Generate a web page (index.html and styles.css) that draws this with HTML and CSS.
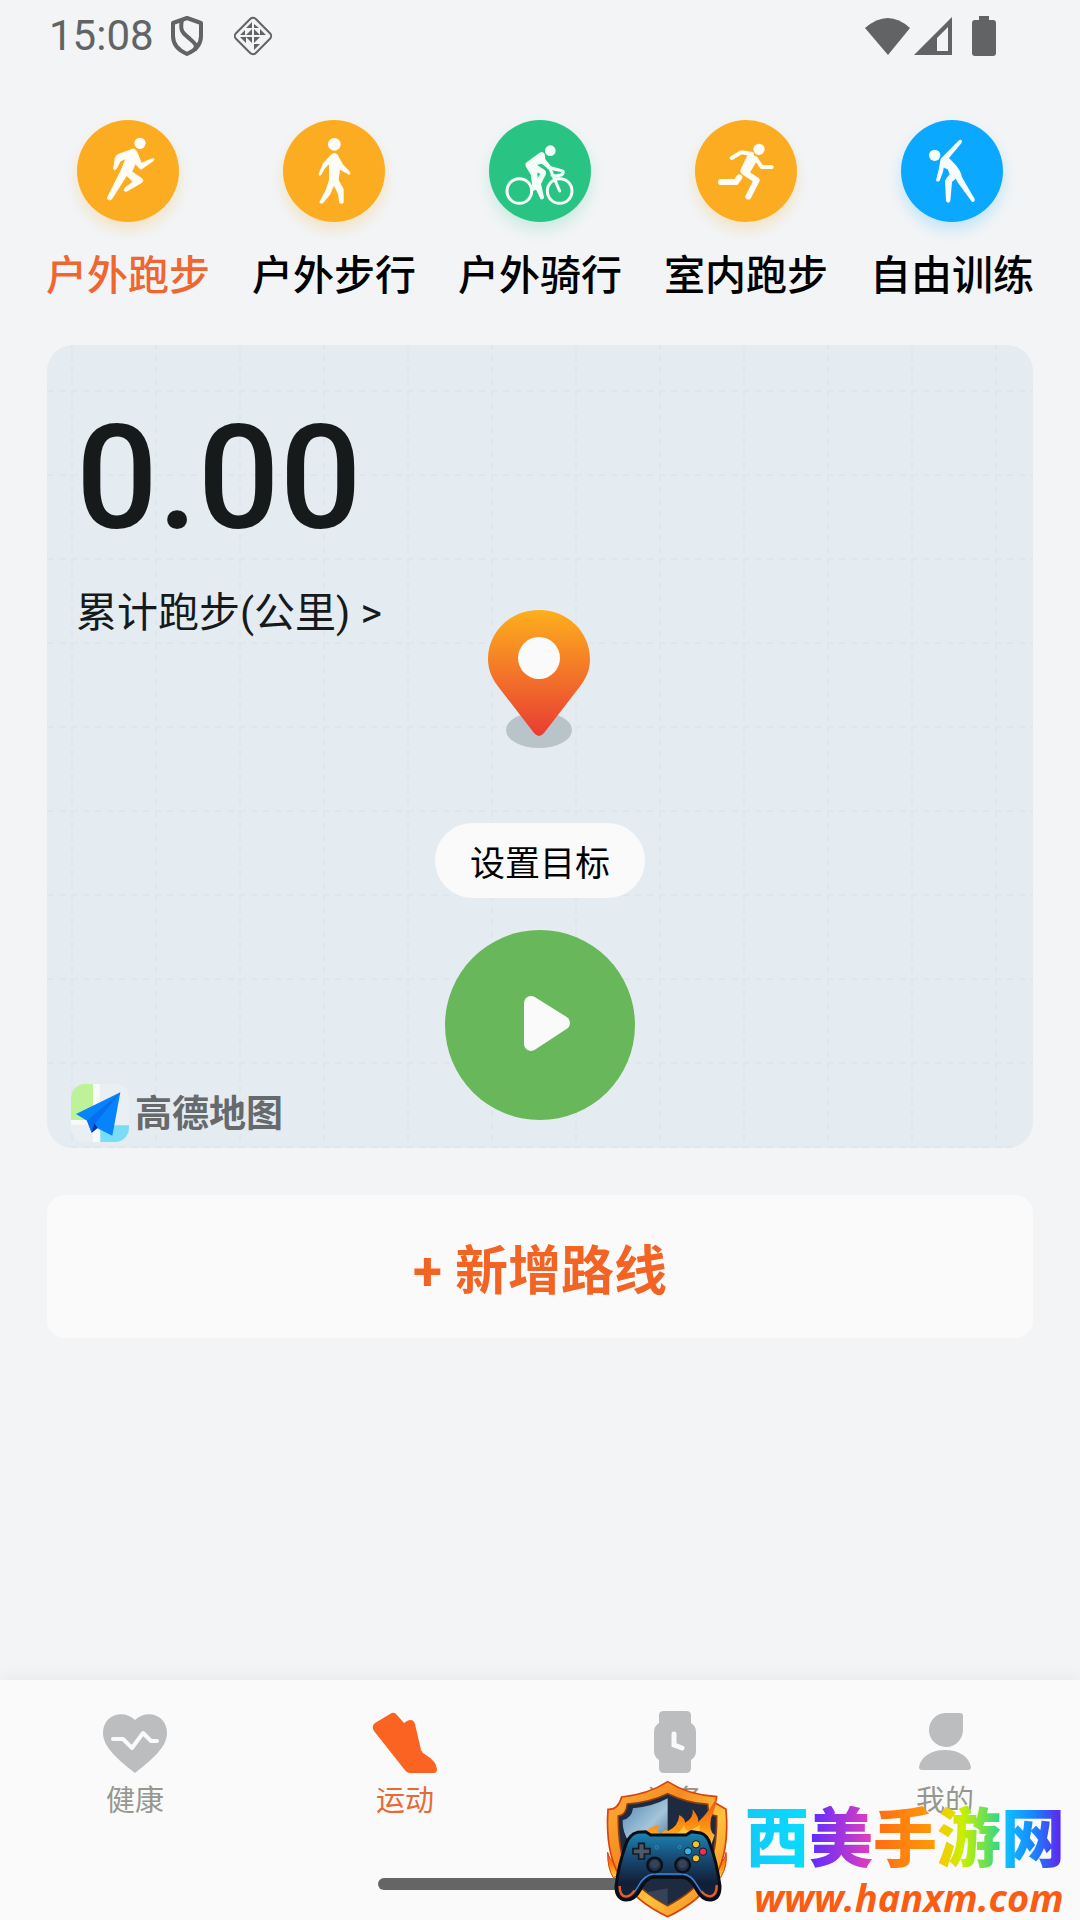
FILE: index.html
```html
<!DOCTYPE html>
<html lang="zh-CN">
<head>
  <meta charset="UTF-8" />
  <meta name="viewport" content="width=device-width, initial-scale=1.0" />
  <title>运动</title>
  <link rel="stylesheet" href="styles.css">
</head>
<body>
  <header class="status-bar">
    <span class="time">15:08</span>
    <svg class="status-shield" width="32" height="40" viewBox="0 0 32 40" fill="none" stroke="#626365" stroke-width="4" stroke-linejoin="round">
      <path d="M16 2 L30 7 V20 C30 29 23 35 16 38 C9 35 2 29 2 20 V7 Z" />
      <path d="M11 4 C8 17 14 18 19 23 C25 28 26 30 24 34" />
    </svg>
    <svg class="status-diamond" width="42" height="44" viewBox="0 0 42 44">
      <rect x="7" y="8" width="28" height="28" rx="4" transform="rotate(45 21 22)" fill="none" stroke="#626365" stroke-width="2" />
      <path d="M20 8 V14 H14 Z M34 21 H28 V15 Z M22 36 V30 H28 Z M8 23 H14 V29 Z M20 15 V21 H14 Z M22 15 L28 21 H22 Z M22 29 V23 H28 Z M20 29 L14 23 H20 Z M22 14 H27 L22 10 Z M13 16 V21 H8 Z" fill="#626365" />
    </svg>
    <div class="status-right">
      <svg width="46" height="37" viewBox="0 0 46 37"><path d="M0 10 Q23 -10 45 10 L23 37 Z" fill="#626365" /></svg>
      <svg width="38" height="38" viewBox="0 0 38 38"><path d="M38 0 V38 H0 Z M34 10 L23 21 V34 H34 Z" fill="#626365" fill-rule="evenodd" /></svg>
      <svg class="battery" width="24" height="40" viewBox="0 0 24 40"><path d="M7 0 H17 V4 H21 Q24 4 24 7 V37 Q24 40 21 40 H3 Q0 40 0 37 V7 Q0 4 3 4 H7 Z" fill="#626365" /></svg>
    </div>
  </header>

  <main>
    <nav class="sports">
      <a href="#" class="sport active">
        <svg class="sport-icon orange" viewBox="0 0 306 306" fill="#fffdf5">
          <circle cx="189" cy="70" r="17" />
          <path d="M169 87 q7 1 10 8 L193 130 L226 116 q8 -1 4 5 L195 146 q-4 2 -7 -1 L175 131 L164 155 L195 176 q5 6 0 11 L150 213 q-10 3 -8 -5 l3 -5 L168 185 L149 166 L104 237 q-6 6 -12 0 q-1 -4 1 -7 L133 150 L147 115 L130 123 L117 147 q-5 5 -7 -1 L115 113 q3 -8 10 -10 Z" stroke="#fffdf5" stroke-width="3" />
        </svg>
        <span>户外跑步</span>
      </a>
      <a href="#" class="sport">
        <svg class="sport-icon orange" viewBox="0 0 306 306" fill="#fffdf5">
          <circle cx="154" cy="73" r="19" />
          <path d="M144 104 Q154 94 164 104 L179 132 L201 156 q4 7 -3 8 L171 149 L167 180 L182 208 L182 249 q-6 5 -13 0 L165 222 L153 197 L141 224 L121 248 q-7 6 -12 -1 L129 208 L138 180 L138 133 L126 145 L114 166 q-7 4 -7 -5 L120 130 Z" />
        </svg>
        <span>户外步行</span>
      </a>
      <a href="#" class="sport">
        <svg class="sport-icon green" viewBox="0 0 306 306" fill="#f5fff9">
          <circle cx="184" cy="92" r="16" />
          <g fill="none" stroke="#f5fff9" stroke-width="9">
            <circle cx="91" cy="213" r="37" />
            <circle cx="212" cy="213" r="37" />
            <path d="M184 148 L212 213 M189 166 L208 169 M132 208 L150 200" stroke-linecap="round" />
          </g>
          <path d="M152 98 q9 -5 15 4 L169 118 L186 139 L219 148 q9 2 8 10 q-2 11 -14 12 l-10 -1 v-6 l14 -3 l-1 -4 L181 149 q-5 -1 -8 -6 L158 131 L144 135 L166 149 q8 6 4 15 L156 192 L165 232 q-1 9 -10 6 L139 205 L130 204 L126 165 L111 140 q-5 -8 3 -14 Z" />
          <path d="M145 157 l9 5 -8 12 z" fill="#29c484" />
        </svg>
        <span>户外骑行</span>
      </a>
      <a href="#" class="sport">
        <svg class="sport-icon orange" viewBox="0 0 306 306" fill="none" stroke="#fffdf5" stroke-linecap="round" stroke-linejoin="round">
          <circle cx="192" cy="88" r="17" fill="#fffdf5" stroke="none" />
          <path d="M110 114 L139 97 L171 102 M183 116 L200 141 H230" stroke-width="12" />
          <path d="M165 108 L144 152 L157 155 L180 117 Z" fill="#fffdf5" stroke-width="16" />
          <path d="M147 156 L185 181 L160 230 M133 172 L123 186 H78" stroke-width="18" />
        </svg>
        <span>室内跑步</span>
      </a>
      <a href="#" class="sport">
        <svg class="sport-icon blue" viewBox="0 0 306 306" fill="#f7fcff">
          <circle cx="101" cy="106" r="17" />
          <path d="M119 116 L174 61 q7 -4 9 3 L181 70 L144 114 L162 133 Q179 151 183 172 L221 237 q2 10 -8 9 L171 188 L164 176 L153 186 L148 243 q-6 10 -13 0 L132 183 Q134 177 146 163 L140 148 L128 143 L126 155 L116 182 q-8 6 -11 -1 L114 145 Z" />
        </svg>
        <span>自由训练</span>
      </a>
    </nav>

    <section class="map-card">
      <svg class="map-grid" width="100%" height="100%">
        <defs>
          <pattern id="grid" x="24" y="45" width="84" height="84" patternUnits="userSpaceOnUse">
            <path d="M1 0 V84 M0 1 H84" stroke="#dfe7ed" stroke-width="2" stroke-dasharray="7 5" />
          </pattern>
        </defs>
        <rect width="100%" height="100%" fill="url(#grid)" />
      </svg>

      <div class="total">
        <div class="total-value">0.00</div>
        <a href="#" class="total-link">累计跑步(公里) &gt;</a>
      </div>

      <svg class="pin" width="104" height="138" viewBox="0 0 104 138">
        <defs>
          <linearGradient id="pinFill" x1="0" y1="0" x2="0" y2="1">
            <stop offset="0" stop-color="#fdaf1d" />
            <stop offset="1" stop-color="#e93c33" />
          </linearGradient>
        </defs>
        <ellipse cx="51" cy="120" rx="33" ry="18" fill="#b8c3ca" />
        <path d="M51 0 C80 0 102 22 102 49 C102 60 98 69 90 79 L56 123 Q51 129 46 123 L12 79 C4 69 0 60 0 49 C0 22 22 0 51 0 Z" fill="url(#pinFill)" />
        <circle cx="51" cy="48" r="21" fill="#fafafa" />
      </svg>

      <button class="goal-btn">设置目标</button>

      <button class="start-btn" aria-label="开始">
        <svg width="190" height="190" viewBox="0 0 190 190">
          <path d="M86 73 L118 93 L86 114 Z" fill="#fafafa" stroke="#fafafa" stroke-width="14" stroke-linejoin="round" />
        </svg>
      </button>

      <div class="map-logo">
        <svg width="58" height="58" viewBox="0 0 174 174">
          <defs>
            <clipPath id="logoClip"><rect width="174" height="174" rx="42" /></clipPath>
          </defs>
          <g clip-path="url(#logoClip)">
            <rect width="174" height="174" fill="#e9eff2" />
            <path d="M0 0 H66 V108 H0 Z" fill="#bdf299" />
            <path d="M88 124 H174 V174 H88 Z" fill="#7bdcf6" />
            <path d="M66 0 H86 V174 H66 Z M0 108 H70 V122 H0 Z" fill="#f8fafa" />
          </g>
          <path d="M148 25 L15 90 L48 110 L62 146 L78 132 L124 155 Z" fill="#0784fc" />
          <path d="M148 25 L48 110 L62 146 L70 122 Z" fill="#0670ea" />
          <path d="M62 146 L70 118 L80 132 Z" fill="#0630a8" />
        </svg>
        <span>高德地图</span>
      </div>
    </section>

    <button class="add-route">+ 新增路线</button>
  </main>

  <footer class="tab-bar">
    <nav class="tabs">
      <a href="#" class="tab">
        <svg width="66" height="66" viewBox="0 0 66 66">
          <path d="M33 10 C44 -1 65 4 65 23 C65 38 48 51 33 63 C18 51 1 38 1 23 C1 4 22 -1 33 10 Z" fill="#bbbdbf" />
          <path d="M11 29 H21 L30 38 L41 23 L49 31 H55" fill="none" stroke="#fafafa" stroke-width="4" stroke-linecap="round" stroke-linejoin="round" />
        </svg>
        <span>健康</span>
      </a>
      <a href="#" class="tab active">
        <svg width="66" height="66" viewBox="0 0 66 66">
          <path d="M3 13 L18 4 Q22 1 25 5 L32 13 L35 11 Q41 8 43 14 L49 40 Q50 43 54 45 Q64 51 65 59 Q65 63 62 63 H38 Q35 63 32 59 L2 21 Q-1 16 3 13 Z" fill="#fa6322" />
        </svg>
        <span>运动</span>
      </a>
      <a href="#" class="tab">
        <svg width="66" height="66" viewBox="0 0 66 66">
          <path d="M17 5 Q17 1 22 1 H44 Q49 1 49 5 V13 Q54 16 54 22 V41 Q54 47 49 50 V58 Q49 63 44 63 H22 Q17 63 17 58 V50 Q12 47 12 41 V22 Q12 16 17 13 Z" fill="#bbbdbf" />
          <path d="M32 24 V35 L40 38" fill="none" stroke="#fafafa" stroke-width="5" stroke-linecap="round" />
        </svg>
        <span>设备</span>
      </a>
      <a href="#" class="tab">
        <svg width="66" height="66" viewBox="0 0 66 66">
          <path d="M33 3 H48 Q51 3 51 6 V20 A17 17 0 1 1 33 3 Z" fill="#bbbdbf" />
          <path d="M7 57 C9 46 20 40 33 40 C46 40 57 46 59 57 Q59 60 56 60 H10 Q7 60 7 57 Z" fill="#bbbdbf" />
        </svg>
        <span>我的</span>
      </a>
    </nav>
    <div class="home-indicator"></div>

    <div class="site-mark">
      <svg class="site-logo" width="140" height="145" viewBox="0 0 420 435">
        <defs>
          <linearGradient id="gold" x1="0" y1="0" x2="1" y2="1">
            <stop offset="0" stop-color="#ffb13b" />
            <stop offset="0.35" stop-color="#f58a1e" />
            <stop offset="0.6" stop-color="#ffc23d" />
            <stop offset="1" stop-color="#f07a12" />
          </linearGradient>
          <linearGradient id="flame" x1="0" y1="0" x2="0" y2="1">
            <stop offset="0" stop-color="#f0500f" />
            <stop offset="0.6" stop-color="#ff9412" />
            <stop offset="1" stop-color="#ffd34a" />
          </linearGradient>
          <linearGradient id="steel" x1="0" y1="0" x2="1" y2="1">
            <stop offset="0" stop-color="#4f87b4" />
            <stop offset="0.6" stop-color="#a5c5da" />
            <stop offset="1" stop-color="#547996" />
          </linearGradient>
          <linearGradient id="pad" x1="0" y1="0" x2="0" y2="1">
            <stop offset="0" stop-color="#1d86b4" />
            <stop offset="0.35" stop-color="#184f7b" />
            <stop offset="0.75" stop-color="#111f36" />
            <stop offset="1" stop-color="#16243a" />
          </linearGradient>
        </defs>
        <path d="M23 232 Q28 255 45 262 L60 300 L40 308 Q22 280 23 232 Z M378 232 Q376 255 360 262 L342 305 L362 308 Q384 270 378 232 Z" fill="url(#flame)" stroke="#d93b12" stroke-width="3" />
        <path d="M203 20 Q265 60 350 65 L346 84 L378 103 Q389 230 345 306 Q300 380 203 425 Q106 380 60 306 Q15 230 24 103 Q54 105 65 66 Q145 58 203 20 Z" fill="url(#gold)" stroke="#d8420e" stroke-width="5" />
        <path d="M203 56 Q260 84 323 88 L325 108 Q334 122 350 123 Q351 230 322 290 Q285 350 203 392 Q120 350 83 290 Q54 230 55 123 Q78 122 82 87 Q150 82 203 56 Z" fill="#1d2a3f" stroke="#8b3d18" stroke-width="5" />
        <path d="M203 70 V205 H91 Q66 175 68 135 Q95 130 99 100 Q160 94 203 70 Z" fill="url(#steel)" />
        <path d="M203 340 V392 L140 352 Z" fill="#36425a" />
        <path d="M120 185 Q155 150 180 150 Q160 170 184 176 Q196 160 204 168 Q235 155 238 120 Q255 130 255 143 Q282 130 278 103 Q300 132 294 142 Q332 105 350 66 Q350 90 333 130 Q326 170 344 180 L330 220 H100 Z" fill="url(#flame)" />
        <path d="M125 190 Q170 180 215 185 Q245 170 252 150 Q257 170 270 168 Q290 155 300 150 Q295 170 310 190 Z" fill="#ffc63b" />
        <path d="M112 172 L137 170 L152 180 H258 L274 170 L302 174 Q323 180 331 210 Q350 260 360 333 Q361 371 333 375 Q307 377 290 345 Q272 309 248 307 H160 Q138 309 122 342 Q104 377 76 375 Q48 370 48 335 Q54 275 78 207 Q88 178 112 172 Z" fill="url(#pad)" stroke="#090d16" stroke-width="9" />
        <path d="M59 333 Q59 364 78 365 Q98 363 115 333 Q133 300 160 297 H248 Q274 299 292 332 Q310 365 332 364 Q351 360 350 331" fill="none" stroke="#4289df" stroke-width="4" />
        <path d="M59 333 Q59 364 78 365 Q92 364 104 346 M304 349 Q318 365 332 364 Q351 360 350 331" fill="none" stroke="#ef5b24" stroke-width="7" />
        <path d="M116 205 H133 V221 H150 V237 H133 V252 H116 V237 H99 V221 H116 Z" fill="#4d5969" stroke="#131a26" stroke-width="5" />
        <circle cx="164" cy="270" r="22" fill="#222f44" stroke="#0a1019" stroke-width="7" />
        <circle cx="248" cy="270" r="22" fill="#222f44" stroke="#0a1019" stroke-width="7" />
        <circle cx="164" cy="267" r="13" fill="#35425a" />
        <circle cx="248" cy="267" r="13" fill="#35425a" />
        <g stroke="#0d1928" stroke-width="3">
          <circle cx="288" cy="208" r="11" fill="#f2c32c" />
          <circle cx="288" cy="250" r="11" fill="#f2c32c" />
          <circle cx="264" cy="229" r="11" fill="#26b9ea" />
          <circle cx="309" cy="230" r="11" fill="#ee3152" />
        </g>
        <g fill="none" stroke="#2f9fca" stroke-width="2">
          <circle cx="170" cy="217" r="5" />
          <circle cx="239" cy="216" r="5" />
        </g>
      </svg>
      <div class="site-text">
        <div class="site-name">西美手游网</div>
        <div class="site-url">www.hanxm.com</div>
      </div>
    </div>
  </footer>
</body>
</html>
```

FILE: styles.css
```css
* {
  box-sizing: border-box;
}

body {
  margin: 0;
  min-height: 100vh;
  display: flex;
  flex-direction: column;
  background: #f2f4f6;
  font-family: Roboto, 'Noto Sans CJK SC', sans-serif;
  color: #000;
}

a {
  color: inherit;
  text-decoration: none;
}

button {
  border: none;
  padding: 0;
  font-family: inherit;
  cursor: pointer;
}

svg {
  display: block;
}

/* status bar */
.status-bar {
  height: 72px;
  padding: 0 84px 0 49px;
  display: flex;
  align-items: center;
  color: #626365;
}

.time {
  font-size: 42px;
  line-height: 72px;
}

.status-shield {
  margin-left: 17px;
}

.status-diamond {
  margin-left: 29px;
}

.status-right {
  margin-left: auto;
  display: flex;
  align-items: center;
  gap: 3px;
}

.battery {
  margin-left: 17px;
}

main {
  flex: 1;
  padding: 48px 47px;
}

/* sport types */
.sports {
  display: grid;
  grid-template-columns: repeat(5, 1fr);
  margin: 0 -22px;
}

.sport {
  display: flex;
  flex-direction: column;
  align-items: center;
  gap: 24px;
  font-size: 41px;
  line-height: 60px;
  font-weight: 500;
  white-space: nowrap;
}

.sport.active {
  color: #f0662f;
}

.sport-icon {
  width: 102px;
  height: 102px;
  border-radius: 50%;
}

.orange {
  background: #fcac20;
  box-shadow: 0 8px 14px rgba(252, 172, 32, 0.22);
}

.green {
  background: #29c484;
  box-shadow: 0 8px 14px rgba(41, 196, 132, 0.18);
}

.blue {
  background: #0aa8ff;
  box-shadow: 0 8px 14px rgba(10, 168, 255, 0.2);
}

/* map */
.map-card {
  position: relative;
  margin-top: 39px;
  padding: 265px 0 28px;
  display: flex;
  flex-direction: column;
  align-items: center;
  background: #e4ecf2;
  border-radius: 26px;
  overflow: hidden;
}

.map-grid {
  position: absolute;
  inset: 0;
}

.total {
  position: absolute;
  top: 62px;
  left: 29px;
  color: #171a1b;
}

.total-value {
  font-size: 144px;
  line-height: 144px;
  font-weight: 500;
}

.total-link {
  display: block;
  margin-top: 38px;
  font-size: 41px;
  line-height: 48px;
}

.pin {
  position: relative;
}

.goal-btn {
  position: relative;
  width: 210px;
  height: 75px;
  margin-top: 75px;
  padding-top: 8px;
  border-radius: 38px;
  background: #fafafa;
  color: #000;
  font-size: 35px;
  line-height: 67px;
}

.start-btn {
  position: relative;
  width: 190px;
  height: 190px;
  margin-top: 32px;
  border-radius: 50%;
  background: #68b85b;
}

.map-logo {
  position: absolute;
  left: 24px;
  bottom: 6px;
  display: flex;
  align-items: center;
  gap: 6px;
  color: #666a6d;
  font-size: 37px;
  line-height: 54px;
  font-weight: 700;
}

.map-logo span {
  padding-top: 4px;
}

.add-route {
  display: block;
  width: 100%;
  height: 143px;
  margin-top: 47px;
  border-radius: 18px;
  background: #fafafa;
  color: #f26424;
  font-size: 53px;
  font-weight: 700;
}

/* bottom tabs */
.tab-bar {
  position: relative;
  height: 240px;
  background: #fafafa;
  box-shadow: 0 -2px 16px rgba(0, 0, 0, 0.05);
}

.tabs {
  display: grid;
  grid-template-columns: repeat(4, 1fr);
  padding-top: 30px;
}

.tab {
  display: flex;
  flex-direction: column;
  align-items: center;
  gap: 5px;
  color: #969790;
  font-size: 29px;
  line-height: 40px;
}

.tab.active {
  color: #e56a37;
}

.home-indicator {
  width: 30%;
  height: 12px;
  margin: 57px auto 0;
  border-radius: 6px;
  background: #656565;
}

.site-mark {
  position: absolute;
  right: 0;
  bottom: 0;
  width: 480px;
  display: flex;
  align-items: flex-end;
  gap: 5px;
  white-space: nowrap;
}

.site-name {
  width: 320px;
  font-size: 64px;
  line-height: 68px;
  font-weight: 900;
  color: transparent;
  background: linear-gradient(90deg, #14c8f8 0%, #08dcff 19%, #5a2cff 20%, #e03cc0 39%, #ff6a14 40%, #ff9a08 59%, #ffc400 60%, #c8f000 68%, #38d880 79%, #10c8ff 80%, #1688ff 90%, #5a2cf0 98%);
  -webkit-background-clip: text;
  background-clip: text;
}

.site-url {
  padding-left: 9px;
  font-family: 'Open Sans', 'Noto Sans', sans-serif;
  font-size: 38px;
  line-height: 46px;
  font-weight: 700;
  font-style: italic;
  color: #fa5c14;
}
```
